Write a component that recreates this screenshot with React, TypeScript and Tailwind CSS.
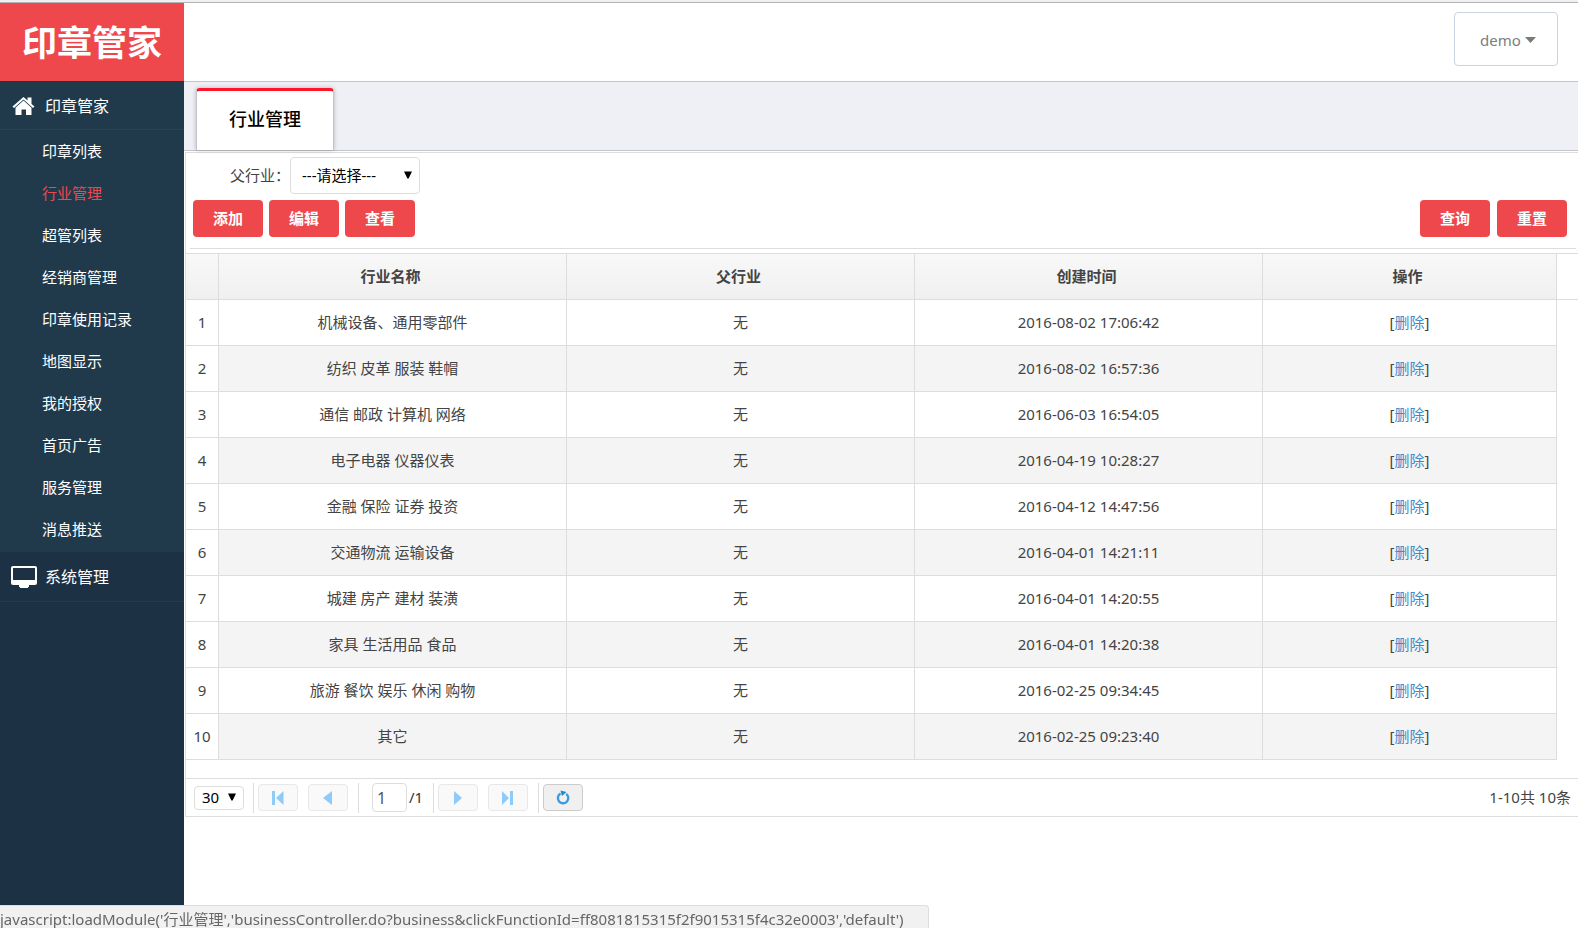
import React from 'react';

interface Industry {
  id: number;
  name: string;
  parent: string;
  createdAt: string;
}

const MENU = ['印章列表', '行业管理', '超管列表', '经销商管理', '印章使用记录', '地图显示', '我的授权', '首页广告', '服务管理', '消息推送'];

const ROWS: Industry[] = [
  { id: 1, name: '机械设备、通用零部件', parent: '无', createdAt: '2016-08-02 17:06:42' },
  { id: 2, name: '纺织 皮革 服装 鞋帽', parent: '无', createdAt: '2016-08-02 16:57:36' },
  { id: 3, name: '通信 邮政 计算机 网络', parent: '无', createdAt: '2016-06-03 16:54:05' },
  { id: 4, name: '电子电器 仪器仪表', parent: '无', createdAt: '2016-04-19 10:28:27' },
  { id: 5, name: '金融 保险 证券 投资', parent: '无', createdAt: '2016-04-12 14:47:56' },
  { id: 6, name: '交通物流 运输设备', parent: '无', createdAt: '2016-04-01 14:21:11' },
  { id: 7, name: '城建 房产 建材 装潢', parent: '无', createdAt: '2016-04-01 14:20:55' },
  { id: 8, name: '家具 生活用品 食品', parent: '无', createdAt: '2016-04-01 14:20:38' },
  { id: 9, name: '旅游 餐饮 娱乐 休闲 购物', parent: '无', createdAt: '2016-02-25 09:34:45' },
  { id: 10, name: '其它', parent: '无', createdAt: '2016-02-25 09:23:40' },
];

const Caret = ({ className }: { className: string }) => (
  <svg className={className} width="8" height="8" viewBox="0 0 8 8" aria-hidden="true">
    <path d="M0 0.5h8L4.6 7.5h-1.2z" fill="#000" />
  </svg>
);

const ActionButton = ({ children }: { children: React.ReactNode }) => (
  <button type="button" className="h-[37px] w-[70px] rounded bg-[#ee484d] text-[15px] font-bold text-white hover:bg-[#dd3b40]">
    {children}
  </button>
);

const PagerButton = ({ label, children, active = false }: { label: string; children: React.ReactNode; active?: boolean }) => (
  <button
    type="button"
    aria-label={label}
    className={
      active
        ? 'flex h-[27px] w-10 items-center justify-center rounded border border-[#cccccc] bg-[#f0f0f0]'
        : 'flex h-[27px] w-10 items-center justify-center rounded border border-[#e8e8e8] bg-[#f9f9f9]'
    }
  >
    {children}
  </button>
);

const Separator = () => <span className="h-[30px] w-px bg-[#dddddd]" />;

const Sidebar = () => (
  <aside className="w-46 shrink-0 bg-[#1c3144] text-white">
    <div className="flex h-[78px] items-center justify-center bg-[#ee484d] text-[35px] font-bold leading-none">印章管家</div>

    <nav>
      <a href="#seal" className="flex h-[49px] items-center gap-[10px] border-b border-[#2f4250] bg-[#203a4c] pl-3 pt-[2px] text-base">
        <svg width="23" height="18" viewBox="0 0 23 18" fill="#fff" aria-hidden="true">
          <path d="M11.5 0 15.500 3.400V0.500h4v6.400L22.500 9.500l-1.500 1.500L11.5 2.600 2 11 0.500 9.500z" />
          <path d="M11.5 3.600 19.500 10.800V18h-5.500v-5.500H9.500V18H3.500v-7.200z" />
        </svg>
        印章管家
      </a>
      <ul className="bg-[#203a4c] pb-[2px]">
        {MENU.map((item) => (
          <li key={item}>
            <a
              href={`#${item}`}
              className={
                item === '行业管理'
                  ? 'flex h-[42px] items-center pl-[42px] text-[15px] text-[#ee484d]'
                  : 'flex h-[42px] items-center pl-[42px] text-[15px] hover:text-[#ee484d]'
              }
            >
              {item}
            </a>
          </li>
        ))}
      </ul>
      <a href="#system" className="flex h-[50px] items-center gap-2 border-b border-[#27394a] pl-[11px] text-base">
        <svg width="26" height="22" viewBox="0 0 26 22" aria-hidden="true">
          <path fill="#fff" fillRule="evenodd" d="M2 0h22a2 2 0 0 1 2 2v15a2 2 0 0 1-2 2h-6v2h-1v1H9v-1H8v-2H2a2 2 0 0 1-2-2V2a2 2 0 0 1 2-2zm0 2v12h22V2z" />
        </svg>
        系统管理
      </a>
    </nav>
  </aside>
);

const Pager = () => (
  <div className="flex h-[39px] items-center border-y border-[#dddddd] pl-2 pr-[7px]">
    <div className="relative mr-[9px]">
      <select aria-label="每页条数" className="h-6 w-[50px] appearance-none rounded border border-[#dddddd] bg-white pl-[7px] text-[15px] leading-none text-black">
        <option>30</option>
      </select>
      <Caret className="pointer-events-none absolute right-2 top-2" />
    </div>
    <Separator />
    <div className="ml-1 mr-[10px] flex gap-[10px]">
      <PagerButton label="首页">
        <svg width="12" height="14" viewBox="0 0 12 14" fill="#8ecbf8"><path d="M0 0h3v14H0zM11.500 0v14L4 7z" /></svg>
      </PagerButton>
      <PagerButton label="上一页">
        <svg width="10" height="14" viewBox="0 0 10 14" fill="#8ecbf8"><path d="M9 0v14L0 7z" /></svg>
      </PagerButton>
    </div>
    <Separator />
    <input aria-label="页码" defaultValue="1" className="ml-[13px] h-[29px] w-[35px] rounded border border-[#dddddd] pl-1 text-base text-[#555555]" />
    <span className="ml-[2px] mr-[10px] text-[15px] text-[#333333]">/1</span>
    <Separator />
    <div className="ml-1 mr-[10px] flex gap-[10px]">
      <PagerButton label="下一页">
        <svg width="10" height="14" viewBox="0 0 10 14" fill="#8ecbf8"><path d="M1 0v14l8-7z" /></svg>
      </PagerButton>
      <PagerButton label="末页">
        <svg width="12" height="14" viewBox="0 0 12 14" fill="#8ecbf8"><path d="M8 0h3v14H8zM0 0v14l7-7z" /></svg>
      </PagerButton>
    </div>
    <Separator />
    <div className="ml-1">
      <PagerButton label="刷新" active>
        <svg width="14" height="15" viewBox="0 0 14 15" fill="none">
          <path d="M10.200 3.900A5.200 5.200 0 1 1 4.600 3.500" stroke="#3a9be0" strokeWidth="2.400" />
          <path d="M4.500 0.500 10.500 2 6 6z" fill="#2387d0" />
        </svg>
      </PagerButton>
    </div>
    <span className="ml-auto text-[15px]">1-10共 10条</span>
  </div>
);

const IndustryTable = () => (
  <table className="w-full table-fixed border-separate border-spacing-0 border-t border-[#dddddd] text-center text-[15px]">
    <colgroup>
      <col className="w-[33px]" />
      <col className="w-1/4" />
      <col className="w-1/4" />
      <col className="w-1/4" />
      <col />
      <col className="w-[21px]" />
    </colgroup>
    <thead>
      <tr>
        {['', '行业名称', '父行业', '创建时间', '操作'].map((title) => (
          <th key={title} className="h-[46px] border-b border-r border-[#dddddd] bg-linear-to-b from-[#f8f8f8] to-[#f0f0f0] p-0 pr-1 font-bold">
            {title}
          </th>
        ))}
        <th className="border-b border-[#dddddd] p-0" />
      </tr>
    </thead>
    <tbody>
      {ROWS.map((row) => (
        <tr key={row.id} className="group">
          <td className="h-[46px] border-b border-r border-[#dddddd] p-0">{row.id}</td>
          <td className="border-b border-r border-[#dddddd] p-0 group-even:bg-[#f4f4f4]">{row.name}</td>
          <td className="border-b border-r border-[#dddddd] p-0 group-even:bg-[#f4f4f4]">{row.parent}</td>
          <td className="border-b border-r border-[#dddddd] p-0 group-even:bg-[#f4f4f4]">{row.createdAt}</td>
          <td className="border-b border-r border-[#dddddd] p-0 group-even:bg-[#f4f4f4]">
            [<a href={`#delete-${row.id}`} className="text-[#428bca]">删除</a>]
          </td>
          <td className="p-0" />
        </tr>
      ))}
    </tbody>
  </table>
);

export default function App() {
  return (
    <div className="flex min-h-screen flex-col bg-white font-['Noto_Sans','Noto_Sans_CJK_SC',sans-serif] text-[#444444]">
      <div className="h-[3px] border-b border-[#b4b4b8] bg-[#f1f1f1]" />
      <div className="flex flex-1">
        <Sidebar />

        <main className="min-w-0 flex-1">
          <header className="flex h-[79px] items-start justify-end border-b border-[#c3c3cb] pr-5 pt-[9px]">
            <button type="button" className="flex h-[54px] w-26 items-center justify-center gap-1 rounded border border-[#cbd2e0] pl-1 pt-[2px] text-[15px] text-[#7d7d7d]">
              demo
              <svg width="11" height="6" viewBox="0 0 11 6" aria-hidden="true"><path d="M0 0h11L5.500 6z" fill="#7a7a7a" /></svg>
            </button>
          </header>

          <div className="flex h-[69px] items-end border-b border-[#c3c3cb] bg-[#eff0f6] pl-3">
            <a href="#tab" className="flex h-[62px] w-[138px] items-center justify-center rounded-t border border-b-0 border-t-3 border-[#c3c3cb] border-t-[#ff1428] bg-white pb-[3px] text-lg font-medium text-black shadow-[0_0_4px_rgba(0,0,0,0.25)]">
              行业管理
            </a>
          </div>

          <section className="ml-px mt-px border-l border-t border-[#dddddd]">
            <form className="px-[7px] pt-1" onSubmit={(e) => e.preventDefault()}>
              <div className="flex items-center pl-[37px]">
                <label htmlFor="parent" className="w-[60px] whitespace-nowrap text-[15px]">父行业：</label>
                <div className="relative">
                  <select id="parent" className="h-[37px] w-[130px] appearance-none rounded border border-[#dddddd] bg-white pl-[11px] text-[15px] text-black">
                    <option>---请选择---</option>
                  </select>
                  <Caret className="pointer-events-none absolute right-2 top-[14px]" />
                </div>
              </div>
              <div className="mt-[6px] flex gap-[6px] pr-1">
                <ActionButton>添加</ActionButton>
                <ActionButton>编辑</ActionButton>
                <ActionButton>查看</ActionButton>
                <div className="ml-auto flex gap-[7px]">
                  <ActionButton>查询</ActionButton>
                  <ActionButton>重置</ActionButton>
                </div>
              </div>
            </form>
            <hr className="mb-1 ml-1 mr-[2px] mt-[11px] border-[#dddddd]" />
            <IndustryTable />
            <div className="mt-[18px]">
              <Pager />
            </div>
          </section>
        </main>
      </div>

      <div className="fixed bottom-0 left-0 h-[23px] whitespace-nowrap rounded-tr border-r border-t border-[#dddddd] bg-[#f1f1f1] pr-6 text-[15px] leading-[26px] text-[#666666]">
        javascript:loadModule('行业管理','businessController.do?business&amp;clickFunctionId=ff8081815315f2f9015315f4c32e0003','default')
      </div>
    </div>
  );
}
